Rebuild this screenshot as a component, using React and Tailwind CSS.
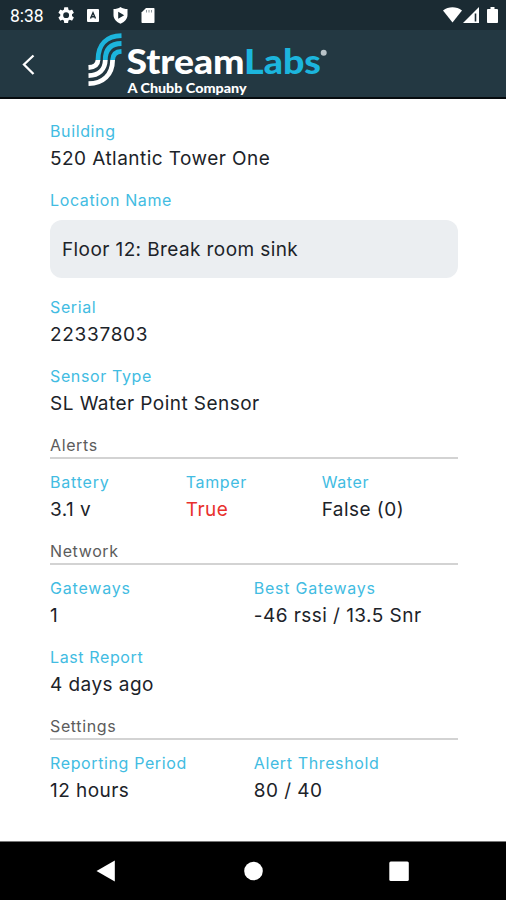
import React from "react";

function Field({ label, value, lx = "0.62px", vx = "0.45px", red }) {
  return (
    <div className="flex flex-col">
      <div className="h-[27px] whitespace-nowrap text-[16px] leading-[27px] text-[#42bce2]">
        <span style={{ letterSpacing: lx }}>{label}</span>
      </div>
      <div className={"h-7 whitespace-nowrap text-[19px] leading-[27px] " + (red ? "text-[#e8302c]" : "text-[#1c2329]")}>
        <span style={{ letterSpacing: vx }}>{value}</span>
      </div>
    </div>
  );
}

function Section({ title }) {
  return (
    <div className="h-[27px] border-b-2 border-[#d3d3d3] text-[16px] leading-[26px] tracking-[0.62px] text-[#5c5c5c]">
      {title}
    </div>
  );
}

function StatusBar() {
  return (
    <div className="h-[30px] bg-[#1b2b33]">
      <svg width="506" height="30" viewBox="0 0 506 30" fill="#fff">
        <text x="10" y="22" fontFamily="Roboto, sans-serif" fontSize="17.5" textLength="33.5">8:38</text>
        <g transform="translate(56.3,5.3) scale(.82)">
          <path d="M19.14 12.94c.04-.3.06-.61.06-.94 0-.32-.02-.64-.07-.94l2.03-1.58a.49.49 0 0 0 .12-.61l-1.92-3.32a.49.49 0 0 0-.59-.22l-2.39.96c-.5-.38-1.03-.7-1.62-.94l-.36-2.54a.48.48 0 0 0-.48-.41h-3.84a.47.47 0 0 0-.47.41l-.36 2.54c-.59.24-1.13.57-1.62.94l-2.39-.96a.48.48 0 0 0-.59.22L2.74 8.87a.47.47 0 0 0 .12.61l2.03 1.58c-.05.3-.09.63-.09.94s.02.64.07.94l-2.03 1.58a.49.49 0 0 0-.12.61l1.92 3.32c.12.22.37.29.59.22l2.39-.96c.5.38 1.03.7 1.62.94l.36 2.54c.05.24.24.41.48.41h3.84c.24 0 .44-.17.47-.41l.36-2.54c.59-.24 1.13-.56 1.62-.94l2.39.96c.22.08.47 0 .59-.22l1.92-3.32a.47.47 0 0 0-.12-.61zM12 15.6A3.6 3.6 0 1 1 12 8.4a3.6 3.6 0 0 1 0 7.2z" />
        </g>
        <rect x="87" y="9" width="12" height="13" rx="1" />
        <path d="M90.500 18.500 93 12.800l2.500 5.700M91.500 16.800h3" fill="none" stroke="#1b2b33" strokeWidth="1.4" />
        <path fillRule="evenodd" d="M120.500 7c2 1.500 4.500 2 7 2v6c0 4-3 7-7 8.800-4-1.800-7-4.800-7-8.800V9c2.500 0 5-.5 7-2zM118.200 11.800v7l6-3.500z" />
        <path d="M146 8h7.500c.6 0 1 .4 1 1v13c0 .6-.4 1-1 1h-11c-.6 0-1-.4-1-1v-9.500z" />
        <path d="M146.500 10v2.500M149 10v2.500M151.500 10v2.500" stroke="#8d979c" strokeWidth="1" />
        <path d="M443 10.500c5.500-4.300 13.500-4.300 19 0L452.500 22.500z" />
        <path d="M479 7v16h-16z" />
        <path d="M475.500 13.500v8" stroke="#1b2b33" strokeWidth="1.6" />
        <path d="M490.500 7h4v2h2.500c.5 0 1 .5 1 1v12c0 .6-.5 1-1 1h-9c-.6 0-1-.5-1-1V10c0-.5.5-1 1-1h2.500z" />
      </svg>
    </div>
  );
}

function Header() {
  return (
    <div className="h-[69px] border-b-2 border-[#060b0e] bg-[#233842]">
      <svg width="506" height="67" viewBox="0 30 506 67">
        <path d="M33.500 55.500 24 64.500l9.500 9.500" fill="none" stroke="#fff" strokeWidth="2.300" />
        <g fill="none" strokeWidth="4.800">
          <g stroke="#1cb5dd">
            <path d="M98 60C98 44 107 36 121.500 35.700" />
            <path d="M105.300 60C105.300 49 111 43.700 121.500 43.500" />
            <path d="M112.600 60C112.800 54.500 116 51.500 121.500 51.300" />
          </g>
          <g stroke="#fff">
            <path d="M98 60C97.800 64.500 94.500 67.200 88.500 67.500" />
            <path d="M105.300 60C105 69.500 99 75.300 88.500 75.600" />
            <path d="M112.600 60C112.500 75 103 83.400 88.500 83.700" />
          </g>
        </g>
        <text x="126.500" y="73.500" fontFamily="Lato, sans-serif" fontSize="34" fontWeight="900" fill="#fff" textLength="118" lengthAdjust="spacingAndGlyphs">Stream</text>
        <text x="244" y="73.500" fontFamily="Lato, sans-serif" fontSize="34" fontWeight="900" fill="#1cb5dd" textLength="77" lengthAdjust="spacingAndGlyphs">Labs</text>
        <circle cx="323.700" cy="52.700" r="3" fill="#b9c3c8" />
        <text x="127.500" y="92.500" fontFamily="Lato, sans-serif" fontSize="13.500" fontWeight="900" fill="#fff" textLength="119" lengthAdjust="spacingAndGlyphs">A Chubb Company</text>
      </svg>
    </div>
  );
}

export default function App() {
  return (
    <div className="flex h-[900px] w-[506px] flex-col overflow-hidden bg-white font-['Inter',sans-serif]">
      <StatusBar />
      <Header />
      <main className="flex flex-1 flex-col pt-[19px] pl-[50px] pr-[48.500px]">
        <Field label="Building" value="520 Atlantic Tower One" />
        <div className="mt-3.5 h-[33px] text-[16px] leading-[27px] tracking-[0.62px] text-[#42bce2]">Location Name</div>
        <div className="h-[58px] rounded-xl bg-[#ebeef1] pl-3 text-[19px] leading-[59px] tracking-[0.4px] text-[#1c2329]">
          Floor 12: Break room sink
        </div>
        <div className="mt-4 flex flex-col gap-3.5">
          <Field label="Serial" value="22337803" vx="0.7px" />
          <Field label="Sensor Type" value="SL Water Point Sensor" />
        </div>
        <div className="mt-3.5">
          <Section title="Alerts" />
        </div>
        <div className="mt-2.5 grid grid-cols-3">
          <Field label="Battery" value="3.1 v" lx="0.8px" />
          <Field label="Tamper" value="True" red />
          <Field label="Water" value="False (0)" />
        </div>
        <div className="mt-3.5">
          <Section title="Network" />
        </div>
        <div className="mt-2.5 grid grid-cols-2 gap-y-3.5">
          <Field label="Gateways" value="1" lx="0.8px" />
          <Field label="Best Gateways" value="-46 rssi / 13.5 Snr" lx="0.75px" />
          <Field label="Last Report" value="4 days ago" />
        </div>
        <div className="mt-3.5">
          <Section title="Settings" />
        </div>
        <div className="mt-2.5 grid grid-cols-2">
          <Field label="Reporting Period" value="12 hours" />
          <Field label="Alert Threshold" value="80 / 40" />
        </div>
      </main>
      <nav className="h-[59px] shrink-0 border-t border-[#777] bg-black">
        <svg width="506" height="58" viewBox="0 842 506 58" fill="#fff">
          <path d="M96.500 871 114.800 860.500v21z" />
          <circle cx="253.500" cy="871" r="9.300" />
          <rect x="389.300" y="861.500" width="19.500" height="19.500" rx="1.500" />
        </svg>
      </nav>
    </div>
  );
}
